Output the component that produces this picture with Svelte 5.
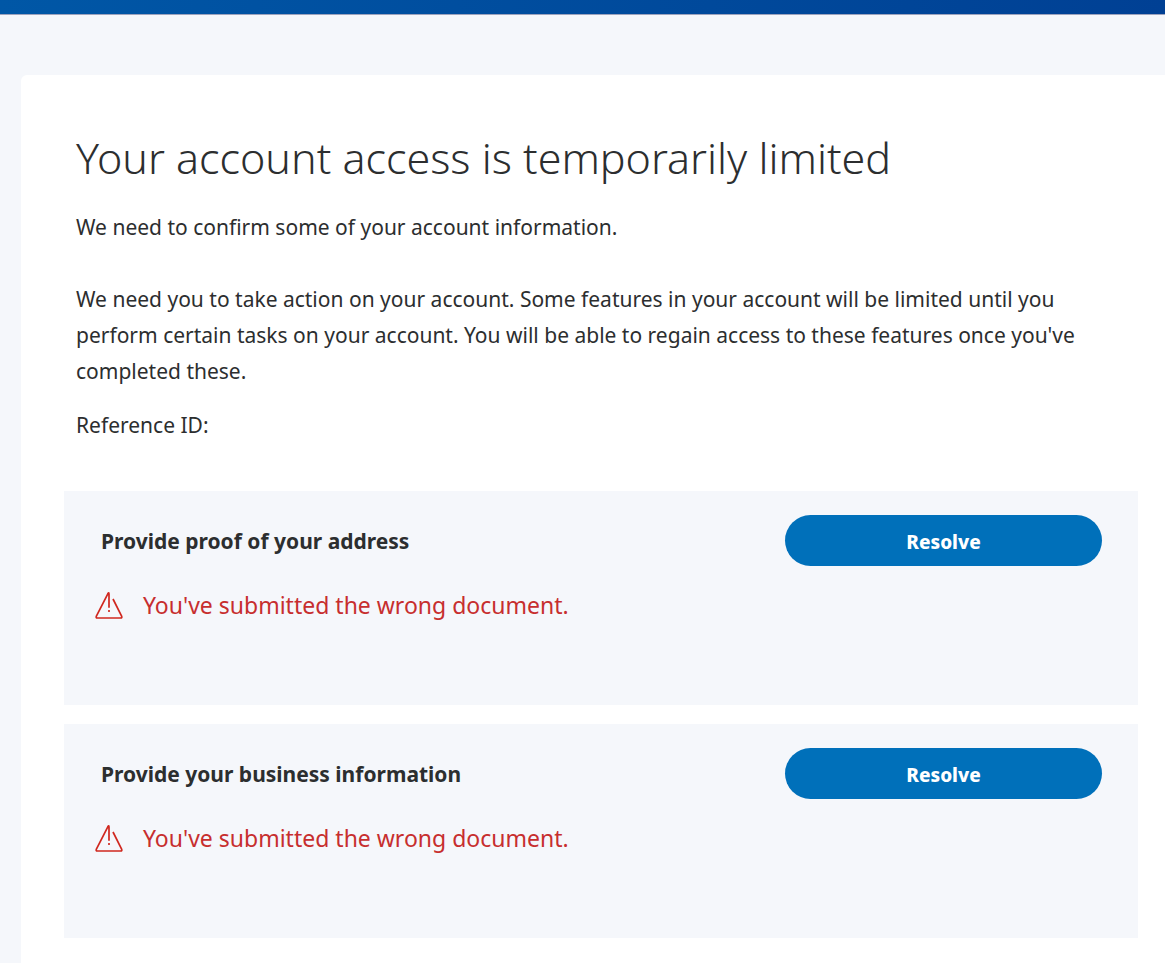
<script lang="ts">
  interface Task {
    id: string;
    title: string;
    message: string;
  }

  const tasks: Task[] = [
    {
      id: "address",
      title: "Provide proof of your address",
      message: "You've submitted the wrong document.",
    },
    {
      id: "business",
      title: "Provide your business information",
      message: "You've submitted the wrong document.",
    },
  ];
</script>

<div class="page">
  <header class="topbar"></header>

  <main class="card">
    <section class="intro">
      <h1>Your account access is temporarily limited</h1>
      <p class="lead">We need to confirm some of your account information.</p>
      <p>
        We need you to take action on your account. Some features in your account will be limited
        until you perform certain tasks on your account. You will be able to regain access to these
        features once you've completed these.
      </p>
      <p>Reference ID:</p>
    </section>

    <ul class="tasks">
      {#each tasks as task (task.id)}
        <li class="task">
          <div class="details">
            <h2 id="task-{task.id}">{task.title}</h2>
            <p class="warning">
              <svg viewBox="0 0 28 28" aria-hidden="true">
                <path d="M18 8 26.6 25Q27.4 27 25.6 27H2.4Q.6 27 1.4 25L12.8 2.8Q14 .8 14 3V16.8" />
                <path d="M14 19V21" />
              </svg>
              {task.message}
            </p>
          </div>
          <button type="button" aria-describedby="task-{task.id}">Resolve</button>
        </li>
      {/each}
    </ul>
  </main>
</div>

<style>
  :global(body) {
    margin: 0;
    background: #f5f7fb;
  }

  .page {
    display: flex;
    flex-direction: column;
    min-height: 100vh;
    color: #2c2e2f;
    font-family: "Noto Sans", "Open Sans", sans-serif;
    font-size: 21px;
    line-height: 36px;
  }

  .topbar {
    height: 14px;
    border-bottom: 1px solid #9da3bd;
    background: linear-gradient(90deg, #0057a6, #004094);
  }

  .card {
    flex: 1;
    box-sizing: border-box;
    margin: 60px 0 0 21px;
    padding: 54px 27px 26px 43px;
    border-radius: 6px 0 0 0;
    background: #fff;
  }

  .intro {
    padding: 0 12px;
  }

  h1 {
    margin: 0 0 22px;
    font-size: 43px;
    font-weight: 300;
    line-height: 58px;
  }

  p {
    margin: 0 0 18px;
  }

  .lead {
    margin-bottom: 36px;
  }

  .tasks {
    display: flex;
    flex-direction: column;
    gap: 19px;
    margin: 48px 0 0;
    padding: 0;
    list-style: none;
  }

  .task {
    display: flex;
    align-items: flex-start;
    justify-content: space-between;
    gap: 24px;
    box-sizing: border-box;
    min-height: 214px;
    padding: 24px 36px 24px 31px;
    background: #f5f7fb;
  }

  h2 {
    margin: 8px 0 28px 6px;
    font-size: 21px;
    font-weight: 700;
    line-height: 36px;
  }

  .warning {
    display: flex;
    align-items: center;
    gap: 20px;
    margin: 0;
    color: #c72e2e;
    font-size: 23px;
  }

  svg {
    flex: none;
    width: 28px;
    height: 28px;
    fill: none;
    stroke: #d0281f;
    stroke-width: 1.7;
  }

  button {
    width: 317px;
    height: 51px;
    padding: 3px 0 0;
    border: 0;
    border-radius: 26px;
    background: #0070ba;
    color: #fff;
    font-family: inherit;
    font-size: 19px;
    font-weight: 800;
    cursor: pointer;
  }
</style>
